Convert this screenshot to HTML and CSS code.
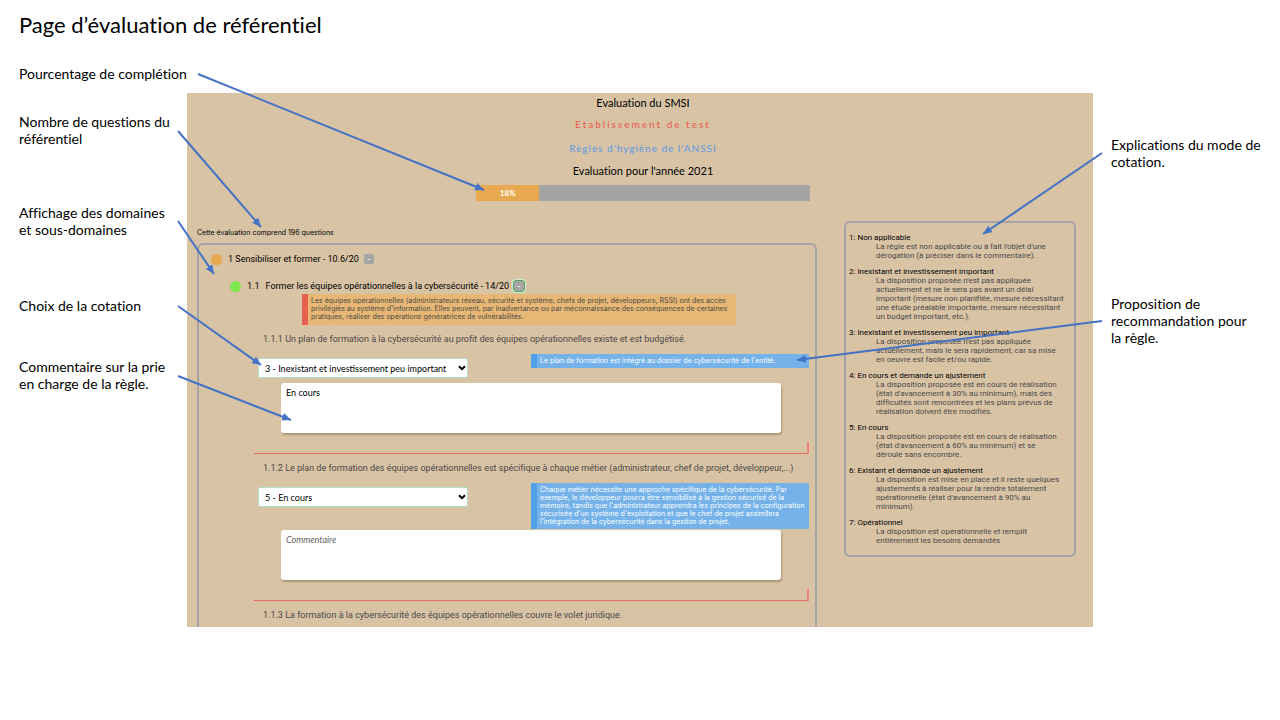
FILE: index.html
```html
<!DOCTYPE html>
<html lang="fr">
<head>
<meta charset="utf-8">
<meta name="viewport" content="width=device-width, initial-scale=1">
<title>Page d’évaluation de référentiel</title>
<link rel="stylesheet" href="styles.css">
</head>
<body>
<div class="slide">
  <h1 class="slide-title">Page d’évaluation de référentiel</h1>
  <div class="board">
    <aside class="callouts callouts-left">
      <p class="callout callout-completion">Pourcentage de complétion</p>
      <p class="callout callout-count">Nombre de questions du<br>référentiel</p>
      <p class="callout callout-domains">Affichage des domaines<br>et sous-domaines</p>
      <p class="callout callout-rating">Choix de la cotation</p>
      <p class="callout callout-comment">Commentaire sur la prie<br>en charge de la règle.</p>
    </aside>

    <main class="app">
      <header class="app-header">
        <h2 class="heading">Evaluation du SMSI</h2>
        <p class="company">Etablissement de test</p>
        <p class="framework">Règles d'hygiène de l'ANSSI</p>
        <p class="heading">Evaluation pour l'année 2021</p>
        <div class="progress" role="progressbar" aria-valuenow="18" aria-valuemin="0" aria-valuemax="100" aria-label="Complétion"><div class="progress-fill">18%</div></div>
      </header>
      <div class="columns">
        <section class="evaluation">
          <p class="count">Cette évaluation comprend 196 questions</p>
          <form class="domains">
            <div class="domain"><span class="dot dot-orange"></span><span>1 Sensibiliser et former - 10.6/20</span><button type="button" class="toggle" aria-label="Replier le domaine">-</button></div>
            <div class="domain subdomain"><span class="dot dot-green"></span><span class="number">1.1</span><span>Former les équipes opérationnelles à la cybersécurité - 14/20</span><button type="button" class="toggle toggle-focus" aria-label="Replier le sous-domaine">-</button></div>
            <p class="note">Les équipes opérationnelles (administrateurs réseau, sécurité et système, chefs de projet, développeurs, RSSI) ont des accès<br>privilégiés au système d'information. Elles peuvent, par inadvertance ou par méconnaissance des conséquences de certaines<br>pratiques, réaliser des opérations génératrices de vulnérabilités.</p>

            <div class="question">
              <label class="question-text" for="rating-1">1.1.1 Un plan de formation à la cybersécurité au profit des équipes opérationnelles existe et est budgétisé.</label>
              <div class="controls">
                <div class="select-wrap">
                  <select class="rating" id="rating-1"><option>3 - Inexistant et investissement peu important</option><option>5 - En cours</option></select>
                  <svg class="chevron" viewBox="0 0 8 6" aria-hidden="true"><path d="M1 1.2 4 4.2 7 1.2"/></svg>
                </div>
                <p class="hint">Le plan de formation est intégré au dossier de cybersécurité de l'entité.</p>
              </div>
              <textarea class="comment" aria-label="Commentaire 1.1.1" placeholder="Commentaire">En cours</textarea>
              <div class="divider"></div>
            </div>

            <div class="question">
              <label class="question-text" for="rating-2">1.1.2 Le plan de formation des équipes opérationnelles est spécifique à chaque métier (administrateur, chef de projet, développeur,...)</label>
              <div class="controls">
                <div class="select-wrap">
                  <select class="rating" id="rating-2"><option>5 - En cours</option><option>3 - Inexistant et investissement peu important</option></select>
                  <svg class="chevron" viewBox="0 0 8 6" aria-hidden="true"><path d="M1 1.2 4 4.2 7 1.2"/></svg>
                </div>
                <p class="hint">Chaque métier nécessite une approche spécifique de la cybersécurité. Par<br>exemple, le développeur pourra être sensibilisé à la gestion sécurisé de la<br>mémoire, tandis que l'administrateur apprendra les principes de la configuration<br>sécurisée d'un système d'exploitation et que le chef de projet assimilera<br>l'intégration de la cybersécurité dans la gestion de projet.</p>
              </div>
              <textarea class="comment" aria-label="Commentaire 1.1.2" placeholder="Commentaire"></textarea>
              <div class="divider"></div>
            </div>

            <div class="question">
              <p class="question-text">1.1.3 La formation à la cybersécurité des équipes opérationnelles couvre le volet juridique.</p>
            </div>
          </form>
        </section>

        <dl class="legend">
          <dt>1: Non applicable</dt>
          <dd>La règle est non applicable ou à fait l'objet d'une<br>dérogation (à préciser dans le commentaire).</dd>
          <dt>2: Inexistant et investissement important</dt>
          <dd>La disposition proposée n'est pas appliquée<br>actuellement et ne le sera pas avant un délai<br>important (mesure non planifiée, mesure nécessitant<br>une étude préalable importante, mesure nécessitant<br>un budget important, etc.).</dd>
          <dt>3: Inexistant et investissement peu important</dt>
          <dd>La disposition proposée n'est pas appliquée<br>actuellement, mais le sera rapidement, car sa mise<br>en oeuvre est facile et/ou rapide.</dd>
          <dt>4: En cours et demande un ajustement</dt>
          <dd>La disposition proposée est en cours de réalisation<br>(état d'avancement à 30% au minimum), mais des<br>difficultés sont rencontrées et les plans prévus de<br>réalisation doivent être modifiés.</dd>
          <dt>5: En cours</dt>
          <dd>La disposition proposée est en cours de réalisation<br>(état d'avancement à 60% au minimum) et se<br>déroule sans encombre.</dd>
          <dt>6: Existant et demande un ajustement</dt>
          <dd>La disposition est mise en place et il reste quelques<br>ajustements à réaliser pour la rendre totalement<br>opérationnelle (état d'avancement à 90% au<br>minimum).</dd>
          <dt>7: Opérationnel</dt>
          <dd>La disposition est opérationnelle et remplit<br>entièrement les besoins demandés</dd>
        </dl>
      </div>
    </main>

    <aside class="callouts callouts-right">
      <p class="callout callout-legend">Explications du mode de<br>cotation.</p>
      <p class="callout callout-hint">Proposition de<br>recommandation pour<br>la règle.</p>
    </aside>
  </div>

  <svg class="arrows" viewBox="0 0 1280 720" preserveAspectRatio="none" aria-hidden="true">
    <defs><marker id="head" viewBox="0 0 9 8" refX="9" refY="4" markerWidth="9" markerHeight="8" markerUnits="userSpaceOnUse" orient="auto"><path class="arrow-head" d="M0 0 9 4 0 8z"/></marker></defs>
    <path class="arrow" d="M198 74 484 190"/>
    <path class="arrow" d="M178 131 261 227"/>
    <path class="arrow" d="M178 221 214 274"/>
    <path class="arrow" d="M178 306 261 365"/>
    <path class="arrow" d="M178 376 291 420"/>
    <path class="arrow" d="M1102 153 983 234"/>
    <path class="arrow" d="M1102 321 797 360"/>
  </svg>
</div>
</body>
</html>
```
FILE: styles.css
```css
* { box-sizing: border-box; }
body { margin: 0; background: #fff; color: #000; font-family: Lato, "Open Sans", sans-serif; font-variant-ligatures: none; }
h1, h2, p, dl, dd { margin: 0; font-weight: 400; }

.slide { position: relative; min-height: 100vh; padding-top: 10px; }
.slide-title { padding-left: 19px; font-size: 22px; line-height: 30px; }
.board { display: grid; grid-template-columns: 187px minmax(0, 1fr) 187px; padding-top: 25px; }

.callouts { font-size: 14px; line-height: 17px; white-space: nowrap; }
.callouts-left { padding-left: 19px; }
.callouts-right { padding-left: 18px; }
.callout-count { margin-top: 31px; }
.callout-domains { margin-top: 57px; }
.callout-rating { margin-top: 59px; }
.callout-comment { margin-top: 44px; }
.callout-legend { margin-top: 71px; }
.callout-hint { margin-top: 125px; }

.app { margin-top: 28px; padding: 0 17px 0 10px; background: #d8c3a5; color: #000; }
.app-header { display: flex; flex-direction: column; align-items: center; padding: 1px 0 0 13px; text-align: center; }
.heading { font-size: 11px; line-height: 17px; }
.company { padding: 6px 0 7px; font-size: 10px; line-height: 14px; letter-spacing: 2px; color: #e85a4f; }
.framework { padding: 3px 0 7px; font-size: 10px; line-height: 14px; letter-spacing: 1px; color: #5a9ae6; }
.progress { width: 100%; max-width: 334px; margin-top: 6px; background: #a4a4a4; }
.progress-fill { width: 19%; background: #e8a850; color: #fff; font-size: 8px; font-weight: 700; line-height: 16px; }

.columns { display: grid; grid-template-columns: minmax(0, 1fr) 232px; gap: 27px; align-items: start; padding-top: 20px; }
.count { padding-top: 6px; font-family: Inter, sans-serif; font-size: 7px; line-height: 12px; }
.domains { margin-top: 4px; padding: 6px 6px 5px 17px; border: 2px solid #a4a4a4; border-bottom: 0; border-radius: 6px 6px 0 0; }
.domain { display: flex; align-items: center; height: 16px; margin-left: -5px; font-family: Roboto, sans-serif; font-size: 9px; white-space: nowrap; }
.subdomain { margin: 11px 0 0 14px; }
.dot { width: 11px; height: 11px; margin-right: 6px; border-radius: 50%; }
.dot-orange { background: #e8a850; }
.dot-green { background: #7de852; }
.number { margin-right: 6px; }
.toggle { width: 10px; height: 10px; margin-left: 5px; padding: 0; border: 0; border-radius: 2px; background: #a4a4a4; color: #fff; font: 700 8px/8px Lato, sans-serif; }
.toggle-focus { outline: 1px solid #5b9f5d; box-shadow: 0 0 0 2px #c9ebcf; }
.note { width: 434px; max-width: 100%; margin-left: 86px; padding: 3px 0 4px 3px; border-left: 6px solid #e86050; background: #e7b775; color: #4c4947; font-family: Inter, sans-serif; font-size: 7px; line-height: 8px; white-space: nowrap; }

.question { margin: 7px 0 0 38px; }
.question-text { display: block; padding-left: 9px; color: #4c4947; font-family: Roboto, sans-serif; font-size: 9px; line-height: 14px; white-space: nowrap; }
.controls { display: flex; justify-content: space-between; align-items: flex-start; min-height: 29px; margin-top: 8px; padding: 0 0 1px 4px; }
.select-wrap { position: relative; width: 210px; margin-top: 4px; }
.rating { display: block; width: 100%; height: 20px; padding: 0 12px 0 6px; appearance: none; border: 1px solid #b4dfc8; border-radius: 2px; background: #fff; color: #000; font: 9px Lato, sans-serif; }
.chevron { position: absolute; right: 2px; top: 7px; width: 8px; height: 6px; pointer-events: none; }
.chevron path { fill: none; stroke: #000; stroke-width: 2; }
.hint { width: 278px; padding: 3px 0 3px 3px; border-left: 6px solid #509fe9; background: #74b2e9; color: #fff; font-family: Inter, sans-serif; font-size: 7px; line-height: 8px; white-space: nowrap; }
.comment { display: block; width: 500px; max-width: 100%; height: 50px; margin-left: 27px; padding: 3px 5px; border: 0; border-radius: 3px; background: #fff; box-shadow: 1px 2px 2px #a99574; color: #000; font: 9px/13px Lato, sans-serif; resize: none; }
.comment::placeholder { color: #666; font-style: italic; }
.divider { height: 12px; margin-top: 9px; border-right: 2px solid #ea8577; border-bottom: 1px solid #e86e62; }

.legend { padding: 10px 3px 10px; border: 2px solid #a4a4a4; border-radius: 6px; font-family: Roboto, sans-serif; font-size: 8px; line-height: 9px; white-space: nowrap; }
.legend dd { padding: 0 0 7px 27px; color: #4c4947; }
.legend dd:last-child { padding-bottom: 0; }

.arrows { position: absolute; top: 0; left: 0; width: 100%; height: 720px; pointer-events: none; }
.arrow { fill: none; stroke: #4472c4; stroke-width: 2; marker-end: url(#head); }
.arrow-head { fill: #4472c4; }
```
